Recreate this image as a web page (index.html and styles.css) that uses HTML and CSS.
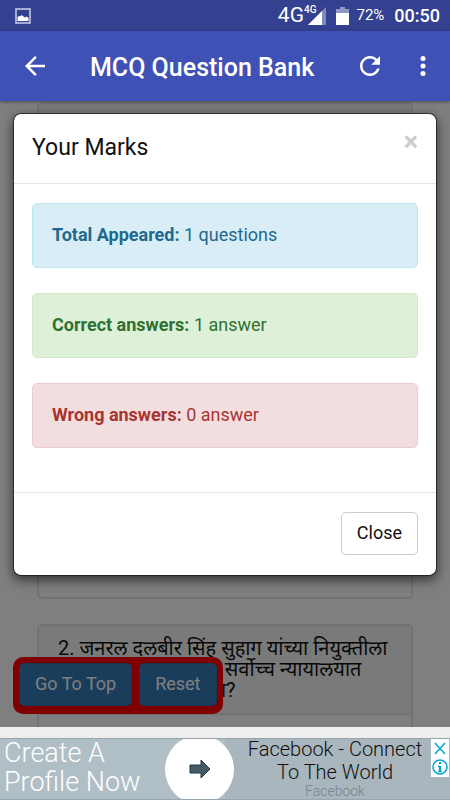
FILE: index.html
```html
<!DOCTYPE html>
<html lang="mr">
<head>
    <meta charset="UTF-8">
    <meta name="viewport" content="width=device-width, initial-scale=1.0">
    <title>MCQ Question Bank</title>
    <link rel="stylesheet" href="styles.css">
</head>
<body>
    <div class="status-bar">
        <svg class="status-picture" width="16" height="16" viewBox="0 0 16 16">
            <rect x="1" y="1" width="14" height="14" fill="none" stroke="#ccd1ea" stroke-width="1.5"/>
            <path d="M2.500 13V9l1.500-1 1 .5L6.500 7l2 1.500 1.500 1 1.500-1 2 1.500v3z" fill="#fff"/>
        </svg>
        <div class="status-right">
            <span class="network">4G</span>
            <span class="network-small">4G</span>
            <svg class="signal" width="18" height="18" viewBox="0 0 18 18">
                <path d="M0 18L18 0v18z" fill="#8089bd"/>
                <path d="M0 18L14 4v14z" fill="#fff"/>
            </svg>
            <svg class="battery" width="13" height="18" viewBox="0 0 13 18">
                <path d="M4 0h5v2h4v4H0V2h4z" fill="#8f98c6"/>
                <path d="M0 6h13v12H0z" fill="#fff"/>
            </svg>
            <span class="percent">72%</span>
            <span class="clock">00:50</span>
        </div>
    </div>

    <header class="app-bar">
        <button type="button" class="icon-btn" aria-label="Back">
            <svg width="30" height="30" viewBox="0 0 24 24" fill="#fff"><path d="M20 11H7.830l5.590-5.590L12 4l-8 8 8 8 1.410-1.410L7.830 13H20v-2z"/></svg>
        </button>
        <h1>MCQ Question Bank</h1>
        <button type="button" class="icon-btn" aria-label="Refresh">
            <svg width="30" height="30" viewBox="0 0 24 24" fill="#fff"><path d="M17.650 6.350C16.200 4.900 14.210 4 12 4c-4.420 0-7.990 3.580-7.990 8s3.570 8 7.990 8c3.730 0 6.840-2.550 7.730-6h-2.080c-.82 2.330-3.040 4-5.650 4-3.310 0-6-2.690-6-6s2.690-6 6-6c1.660 0 3.140.69 4.220 1.780L13 11h7V4l-2.350 2.350z"/></svg>
        </button>
        <button type="button" class="icon-btn icon-menu" aria-label="More">
            <svg width="30" height="30" viewBox="0 0 24 24" fill="#fff"><circle cx="12" cy="6" r="2"/><circle cx="12" cy="12" r="2"/><circle cx="12" cy="18" r="2"/></svg>
        </button>
    </header>

    <main class="content">
        <div class="questions">
            <section class="panel panel-first">
                <div class="panel-heading"></div>
            </section>
            <section class="panel">
                <div class="panel-heading">2. जनरल दलबीर सिंह सुहाग यांच्या नियुक्तीला आव्हान देणारी याचिका सर्वोच्च न्यायालयात कोणी दाखल केली होता?</div>
            </section>
        </div>

        <div class="quick-actions">
            <button type="button" class="btn btn-primary">Go To Top</button>
            <button type="button" class="btn btn-primary">Reset</button>
        </div>

        <div class="backdrop">
            <div class="modal" role="dialog" aria-labelledby="marks-title">
                <div class="modal-header">
                    <h2 id="marks-title">Your Marks</h2>
                    <button type="button" class="close" aria-label="Dismiss">×</button>
                </div>
                <div class="modal-body">
                    <div class="alert alert-info"><strong>Total Appeared:</strong> 1 questions</div>
                    <div class="alert alert-success"><strong>Correct answers:</strong> 1 answer</div>
                    <div class="alert alert-danger"><strong>Wrong answers:</strong> 0 answer</div>
                </div>
                <div class="modal-footer">
                    <button type="button" class="btn btn-default">Close</button>
                </div>
            </div>
        </div>
    </main>

    <aside class="ad">
        <div class="ad-action">Create A<br>Profile Now</div>
        <a href="#" class="ad-arrow" aria-label="Open">
            <svg width="22" height="20" viewBox="0 0 22 20"><path d="M1 6h11V1l9 9-9 9v-5H1z" fill="#455a64" stroke="#173f52"/></svg>
        </a>
        <div class="ad-text">
            <div class="ad-title">Facebook - Connect To The World</div>
            <div class="ad-name">Facebook</div>
        </div>
        <div class="ad-choices">
            <svg width="18" height="38" viewBox="0 0 18 38" fill="none" stroke="#00a5c8" stroke-width="1.500">
                <path d="M4 4l10 11M14 4L4 15"/>
                <circle cx="9" cy="28" r="7"/>
                <path d="M9 23v2M9 27v6" stroke-width="2"/>
                <path d="M7 27.500h2M7 32.500h4"/>
            </svg>
        </div>
    </aside>
</body>
</html>
```
FILE: styles.css
```css
* {
    margin: 0;
    padding: 0;
    box-sizing: border-box;
}

body {
    display: flex;
    flex-direction: column;
    height: 100vh;
    overflow: hidden;
    background: #eee;
    color: #111;
    font-family: Roboto, "Noto Sans Devanagari", "Noto Sans", sans-serif;
    font-size: 18px;
    line-height: 25px;
}

button {
    font: inherit;
    cursor: pointer;
}

svg {
    display: block;
}

/* Status bar */
.status-bar {
    display: flex;
    justify-content: space-between;
    align-items: center;
    flex: none;
    height: 31px;
    padding: 0 10px 0 15px;
    background: #334190;
    color: #fff;
}

.status-right {
    display: flex;
    align-items: center;
}

.network {
    font-size: 21px;
}

.network-small {
    align-self: flex-start;
    font-size: 10px;
    font-weight: 500;
    line-height: 14px;
}

.signal {
    margin-left: -8px;
}

.battery {
    margin-left: 10px;
}

.percent {
    margin-left: 7px;
    font-size: 15px;
}

.clock {
    margin-left: 10px;
    font-size: 18px;
    font-weight: 500;
}

/* App bar */
.app-bar {
    display: flex;
    align-items: center;
    position: relative;
    z-index: 2;
    flex: none;
    height: 70px;
    padding: 0 12px 0 20px;
    background: #3f51b5;
    box-shadow: 0 1px 3px rgba(0, 0, 0, 0.4);
    color: #fff;
}

.app-bar h1 {
    flex: 1;
    margin-left: 40px;
    padding-top: 4px;
    font-size: 25px;
    font-weight: 500;
    line-height: 30px;
}

.icon-btn {
    border: 0;
    background: none;
}

.icon-menu {
    margin-left: 23px;
}

/* Question list */
.content {
    position: relative;
    flex: 1;
    min-height: 0;
    overflow: hidden;
    background: #fff;
}

.questions {
    padding: 1px 37px 0;
}

.panel {
    min-height: 200px;
    margin-bottom: 25px;
    border: 2px solid #e4e4e4;
    border-radius: 5px;
}

.panel-first {
    min-height: 497px;
}

.panel-heading {
    padding: 12px 19px;
    border-bottom: 2px solid #e4e4e4;
    background: #f5f5f5;
    font-size: 20px;
    line-height: 21px;
}

.quick-actions {
    display: flex;
    gap: 7px;
    position: absolute;
    bottom: 13px;
    left: 13px;
    padding: 6px 6px 8px;
    border-radius: 10px;
    background: #f00;
}

.btn {
    padding: 7px 15px 9px;
    border: 1px solid #ccc;
    border-radius: 5px;
    background: #fff;
}

.btn-primary {
    border-color: #2e6da4;
    background: #337ab7;
    color: #fff;
}

.btn-default {
    color: #111;
}

/* Marks dialog */
.backdrop {
    position: absolute;
    inset: 0;
    padding: 12px 13px;
    background: rgba(0, 0, 0, 0.5);
}

.modal {
    border: 1px solid rgba(0, 0, 0, 0.5);
    border-radius: 8px;
    background: #fff;
    background-clip: padding-box;
    box-shadow: 0 4px 12px rgba(0, 0, 0, 0.6);
}

.modal-header {
    display: flex;
    justify-content: space-between;
    align-items: flex-start;
    padding: 19px 18px 20px;
    border-bottom: 1px solid #e5e5e5;
}

.modal-header h2 {
    font-size: 23px;
    font-weight: 400;
    line-height: 30px;
}

.close {
    border: 0;
    background: none;
    color: #ccc;
    font-size: 27px;
    font-weight: 700;
    line-height: 18px;
}

.modal-body {
    padding: 19px 18px 44px;
}

.alert {
    padding: 18px 19px 20px;
    border: 1px solid;
    border-radius: 5px;
}

.alert + .alert {
    margin-top: 25px;
}

.alert strong {
    font-weight: 700;
}

.alert-info {
    border-color: #bce8f1;
    background: #d9edf7;
    color: #1f6a8c;
}

.alert-success {
    border-color: #d0e9c6;
    background: #dff0d8;
    color: #2f7032;
}

.alert-danger {
    border-color: #ebccd1;
    background: #f2dede;
    color: #a83432;
}

.modal-footer {
    display: flex;
    justify-content: flex-end;
    padding: 19px 18px 20px;
    border-top: 1px solid #e5e5e5;
}

/* Bottom ad */
.ad {
    display: flex;
    align-items: center;
    position: relative;
    flex: none;
    height: 62px;
    margin-top: 11px;
    overflow: hidden;
    border-top: 1px solid #97a5ad;
    border-bottom: 1px solid #97a5ad;
    background: linear-gradient(to right, #b0bec5 50%, #a9b6bd 50%);
}

.ad-action {
    width: 165px;
    padding: 0 0 2px 4px;
    color: #fff;
    font-size: 27px;
    font-weight: 300;
    line-height: 29px;
    white-space: nowrap;
}

.ad-arrow {
    display: flex;
    justify-content: center;
    align-items: center;
    flex: none;
    width: 69px;
    height: 69px;
    border-radius: 50%;
    background: #fff;
}

.ad-text {
    flex: 1;
    padding: 0 24px 2px 10px;
    font-weight: 300;
    text-align: center;
}

.ad-title {
    font-size: 20px;
    line-height: 23px;
}

.ad-name {
    color: #77838a;
    font-size: 14px;
    line-height: 14px;
}

.ad-choices {
    position: absolute;
    top: 0;
    right: 1px;
    background: #fff;
}
```
